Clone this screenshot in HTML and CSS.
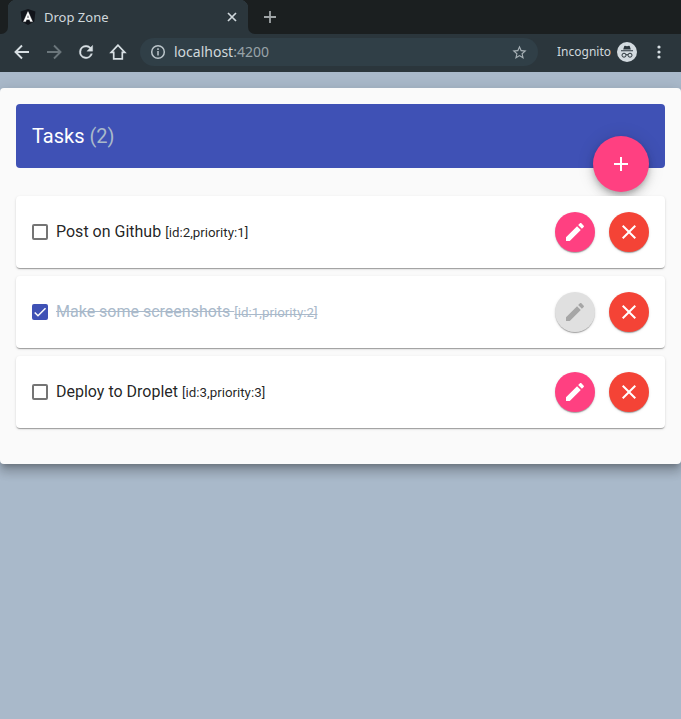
FILE: index.html
```html
<!DOCTYPE html>
<html lang="en">
<head>
<meta charset="utf-8">
<title>Drop Zone</title>
<link rel="stylesheet" href="styles.css">
</head>
<body>
<svg class="symbols" aria-hidden="true">
  <symbol id="edit" viewBox="0 0 24 24"><path d="M3 17.25V21h3.75L17.81 9.94l-3.75-3.75L3 17.25zM20.71 7.04c.39-.39.39-1.02 0-1.41l-2.34-2.34c-.39-.39-1.02-.39-1.41 0l-1.83 1.83 3.75 3.75 1.83-1.83z"/></symbol>
  <symbol id="close" viewBox="0 0 24 24"><path d="M19 6.41L17.59 5 12 10.59 6.41 5 5 6.41 10.59 12 5 17.59 6.41 19 12 13.41 17.59 19 19 17.59 13.41 12z"/></symbol>
  <symbol id="add" viewBox="0 0 24 24"><path d="M19 13h-6v6h-2v-6H5v-2h6V5h2v6h6v2z"/></symbol>
</svg>
<header class="browser">
  <div class="tabs">
    <div class="edge left"></div>
    <div class="tab">
      <svg class="favicon" viewBox="0 0 16 16"><path d="M8 0l7.4 2.6-1.1 9.9L8 16l-6.300-3.500L.6 2.600z" fill="#11141a"/><path d="M8 2.600L3.500 12.600l2.200 0 .8-2.200h3l.8 2.200h2.200zm0 3.400l1 2.700H7z" fill="#fff" stroke="#fff" stroke-width=".4"/></svg>
      <span class="tab-title">Drop Zone</span>
      <svg class="tab-close" viewBox="0 0 10 10"><path d="M1 1l8 8M9 1L1 9"/></svg>
    </div>
    <div class="edge right"><svg class="new-tab" viewBox="0 0 12 12"><path d="M6 0v12M0 6h12"/></svg></div>
  </div>
  <div class="toolbar">
    <svg class="nav" viewBox="0 0 20 20"><path d="M17 10H4M10 3.500L3.500 10l6.500 6.500"/></svg>
    <svg class="nav dim" viewBox="0 0 20 20"><path d="M3 10h13M10 3.500l6.500 6.500-6.500 6.500"/></svg>
    <svg class="nav reload" viewBox="0 0 24 24"><path d="M17.650 6.350A7.960 7.960 0 0 0 12 4a8 8 0 1 0 7.730 10h-2.080A6 6 0 1 1 12 6c1.660 0 3.140.69 4.220 1.780L13 11h7V4l-2.350 2.350z"/></svg>
    <svg class="nav home" viewBox="0 0 18 18"><path d="M9 2.200L2.200 9.300h2.500v6.500h8.600V9.300h2.500z"/></svg>
    <div class="address">
      <svg class="info" viewBox="0 0 16 16"><circle cx="8" cy="8" r="6.300"/><path d="M8 7v4.500M8 4.300v1.700"/></svg>
      <span class="url">localhost<span class="port">:4200</span></span>
      <svg class="star" viewBox="0 0 24 24"><path d="M22 9.240l-7.190-.62L12 2 9.190 8.630 2 9.240l5.460 4.730L5.820 21 12 17.270 18.180 21l-1.630-7.030L22 9.240zM12 15.400l-3.760 2.270 1-4.280-3.320-2.880 4.380-.38L12 6.100l1.710 4.040 4.380.38-3.320 2.880 1 4.280L12 15.400z"/></svg>
    </div>
    <span class="incognito">Incognito</span>
    <svg class="avatar" viewBox="0 0 20 20"><circle cx="10" cy="10" r="10" fill="#d3dbe0"/><path d="M6.200 7.600l1-3.400q.2-.5.8-.4l2 .5 2-.5q.6-.1.8.4l1 3.400zM4 8.300h12v1H4z" fill="#2b363c"/><g fill="none" stroke="#2b363c"><circle cx="7" cy="13.200" r="2"/><circle cx="13" cy="13.200" r="2"/><path d="M9 12.900q1-.6 2 0"/></g></svg>
    <svg class="menu" viewBox="0 0 4 14"><circle cx="2" cy="2" r="1.600"/><circle cx="2" cy="7" r="1.600"/><circle cx="2" cy="12" r="1.600"/></svg>
  </div>
</header>
<main class="panel">
  <div class="heading">
    <h1>Tasks <span class="count">(2)</span></h1>
    <button class="fab add" aria-label="Add"><svg><use href="#add"/></svg></button>
  </div>
  <ul class="tasks">
    <li class="task">
      <span class="box"></span>
      <span class="name">Post on Github <small>[id:2,priority:1]</small></span>
      <button class="fab edit" aria-label="Edit"><svg><use href="#edit"/></svg></button>
      <button class="fab remove" aria-label="Remove"><svg><use href="#close"/></svg></button>
    </li>
    <li class="task done">
      <span class="box checked"><svg viewBox="0 0 24 24"><path d="M4.100 12.700L9 17.600 20.300 6.300"/></svg></span>
      <span class="name">Make some screenshots <small>[id:1,priority:2]</small></span>
      <button class="fab edit" aria-label="Edit" disabled><svg><use href="#edit"/></svg></button>
      <button class="fab remove" aria-label="Remove"><svg><use href="#close"/></svg></button>
    </li>
    <li class="task">
      <span class="box"></span>
      <span class="name">Deploy to Droplet <small>[id:3,priority:3]</small></span>
      <button class="fab edit" aria-label="Edit"><svg><use href="#edit"/></svg></button>
      <button class="fab remove" aria-label="Remove"><svg><use href="#close"/></svg></button>
    </li>
  </ul>
</main>
</body>
</html>
```
FILE: styles.css
```css
* { box-sizing: border-box; }
body {
  margin: 0;
  min-height: 100vh;
  background: #a9b9ca;
  font-family: Roboto, "Liberation Sans", sans-serif;
  color: rgba(0, 0, 0, .87);
}
svg { display: block; flex: none; }
.symbols { display: none; }

.browser {
  height: 72px;
  background: #2b363c;
  font-family: "Noto Sans", sans-serif;
  color: #d0d8dc;
}
.tabs {
  height: 34px;
  display: flex;
  background: linear-gradient(#1b1f20 50%, #2b363c 50%);
}
.edge { background: #1b1f20; }
.edge.left { width: 8px; border-bottom-right-radius: 7px; }
.edge.right {
  flex: 1;
  padding-left: 16px;
  display: flex;
  align-items: center;
  border-bottom-left-radius: 7px;
}
.tab {
  width: 240px;
  height: 34px;
  padding: 0 11px 0 12px;
  display: flex;
  align-items: center;
  gap: 8px;
  border-radius: 8px 8px 0 0;
  background: #2b363c;
  box-shadow: 0 -8px 0 #1b1f20;
}
.tabs { overflow: hidden; }
.tab { background: radial-gradient(circle at 8px 8px, #2b363c 8px, #1b1f20 8.500px) 0 0 / 8px 8px no-repeat, radial-gradient(circle at 0 8px, #2b363c 8px, #1b1f20 8.500px) 100% 0 / 8px 8px no-repeat, #2b363c; border-radius: 0; }
.favicon { width: 16px; height: 16px; }
.tab-title { flex: 1; font-size: 13px; }
.tab-close { width: 10px; height: 10px; stroke: #d0d8dc; stroke-width: 1.7; }
.new-tab { width: 12px; height: 12px; stroke: #a0a5a7; stroke-width: 1.8; }
.toolbar {
  height: 38px;
  padding: 0 20px 2px 12px;
  display: flex;
  align-items: center;
}
.nav { width: 20px; height: 20px; margin-right: 12px; fill: none; stroke: #d7dfe3; stroke-width: 1.9; }
.nav.dim { stroke: #6b767b; }
.nav.reload { fill: #d7dfe3; stroke-width: .4; }
.nav.home { width: 18px; height: 18px; margin: 0 13px 0 1px; stroke-width: 1.7; }
.address {
  width: 398px;
  height: 28px;
  padding: 0 10px;
  display: flex;
  align-items: center;
  border-radius: 14px;
  background: #303f47;
}
.info { width: 16px; height: 16px; fill: none; stroke: #bcc6cb; stroke-width: 1.5; }
.url { flex: 1; margin-left: 8px; padding-bottom: 2px; font-size: 14px; }
.port { color: #98a3a9; }
.star { width: 17px; height: 17px; fill: #a7b1b6; }
.incognito { width: 60px; margin-left: 19px; padding-bottom: 2px; font-size: 12px; }
.avatar { width: 20px; height: 20px; }
.menu { width: 4px; height: 14px; margin-left: auto; fill: #d7dfe3; }

.panel {
  height: 376px;
  margin-top: 16px;
  padding: 16px;
  border-radius: 4px;
  background: #fafafa;
  box-shadow: 0 5px 5px -3px rgba(0,0,0,.2), 0 8px 10px 1px rgba(0,0,0,.14), 0 3px 14px 2px rgba(0,0,0,.12);
}
.heading {
  position: relative;
  height: 64px;
  padding: 0 16px;
  display: flex;
  align-items: center;
  border-radius: 4px;
  background: #3f51b5;
}
h1 { margin: 0; font-size: 20px; font-weight: 400; color: #fff; }
.count { color: #a9b9ca; }
.fab {
  width: 40px;
  height: 40px;
  padding: 0;
  display: grid;
  place-items: center;
  flex: none;
  border: 0;
  border-radius: 50%;
  background: #ff4081;
  box-shadow: 0 2px 1px -1px rgba(0,0,0,.2), 0 1px 1px 0 rgba(0,0,0,.14), 0 1px 3px 0 rgba(0,0,0,.12);
}
.fab svg { width: 24px; height: 24px; fill: #fff; }
.fab.add {
  position: absolute;
  right: 16px;
  bottom: -24px;
  width: 56px;
  height: 56px;
  box-shadow: 0 3px 5px -1px rgba(0,0,0,.2), 0 6px 10px 0 rgba(0,0,0,.14), 0 1px 18px 0 rgba(0,0,0,.12);
}
.fab.remove { background: #f44336; }
.fab:disabled { background: #e0e0e0; }
.fab:disabled svg { fill: #a6a6a6; }

.tasks {
  position: relative;
  margin: 28px 0 0;
  padding: 0;
  display: grid;
  gap: 8px;
  list-style: none;
}
.task {
  height: 72px;
  padding: 0 16px;
  display: flex;
  align-items: center;
  border-radius: 4px;
  background: #fff;
  box-shadow: 0 2px 1px -1px rgba(0,0,0,.2), 0 1px 1px 0 rgba(0,0,0,.14), 0 1px 3px 0 rgba(0,0,0,.12);
}
.box { width: 16px; height: 16px; border: 2px solid #757575; border-radius: 2px; }
.box.checked { border: 0; background: #3f51b5; }
.checked svg { width: 16px; height: 16px; fill: none; stroke: #fafafa; stroke-width: 2.3; }
.name { flex: 1; margin-left: 8px; font-size: 16px; line-height: 24px; }
.name small { font-size: 13.33px; }
.done .name { color: #a9b9ca; text-decoration: line-through; }
.remove { margin-left: 14px; }
```
